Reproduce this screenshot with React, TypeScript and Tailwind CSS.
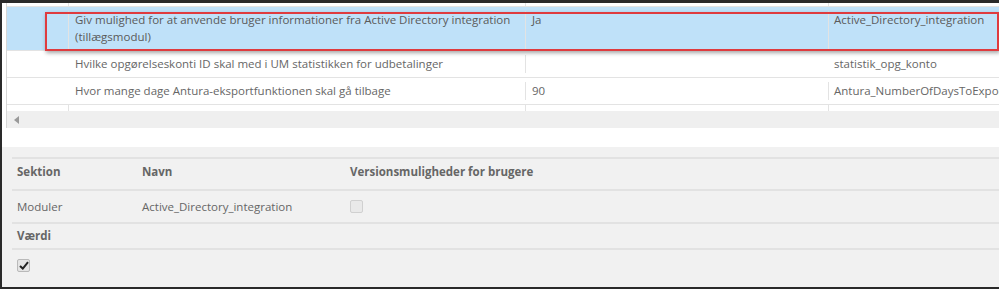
import React from 'react';

const font = { fontFamily: '"Open Sans", "Liberation Sans", sans-serif' };

const rows = [
  { desc: 'Hvilke opgørelseskonti ID skal med i UM statistikken for udbetalinger', value: '', key: 'statistik_opg_konto' },
  { desc: 'Hvor mange dage Antura-eksportfunktionen skal gå tilbage', value: '90', key: 'Antura_NumberOfDaysToExport' },
];

const Cells: React.FC<{ desc?: React.ReactNode; value?: string; name?: string; className?: string }> = ({ desc, value, name, className }) => (
  <div className={`flex border-b border-[#e3e3e3] ${className ?? ''}`}>
    <div className="w-[62px] shrink-0 border-r border-[#e3e3e3]" />
    <div className="w-[457px] shrink-0 border-r border-[#e3e3e3] px-[6px]">{desc}</div>
    <div className="w-[303px] shrink-0 border-r border-[#e3e3e3] px-[6px]">{value}</div>
    <div className="flex-1 whitespace-nowrap overflow-hidden px-[5px]">{name}</div>
  </div>
);

export default function App() {
  return (
    <div
      className="relative w-[999px] h-[289px] overflow-hidden bg-white border-l-2 border-t-[3px] border-b-[2px] border-[#2a2a2a] text-[11.5px] text-[#666]"
      style={font}
    >
      {/* upper grid */}
      <div className="ml-[4px] border-l border-[#d6d6d6]">
        <Cells className="h-[4px]" />
        <Cells
          className="h-[44px] bg-[#bfe1f9] pt-[4px] leading-[17px] text-[#5a5a5a]"
          desc={
            <>
              Giv mulighed for at anvende bruger informationer fra Active Directory integration (tillægsmodul)
            </>
          }
          value="Ja"
          name="Active_Directory_integration"
        />
        {rows.map((r) => (
          <Cells key={r.key} className="h-[27px] items-center" desc={r.desc} value={r.value} name={r.key} />
        ))}
        <Cells className="h-[6px] border-b-0" />
        <div className="h-[17px] bg-[#efefef] flex items-center pl-[7px]">
          <svg width="5" height="8" viewBox="0 0 5 8">
            <path d="M5 0 L0 4 L5 8 Z" fill="#9a9a9a" />
          </svg>
        </div>
      </div>

      <div className="h-[19px]" />

      {/* detail panel */}
      <div className="bg-[#f1f1f1] h-[141px] pl-[10px] pt-[10px]">
        <div className="border-t-2 border-[#e2e2e2]">
          <div className="flex h-[32px] items-center pb-[4px] font-bold text-[#666] border-b-2 border-[#e2e2e2]">
            <div className="w-[125px] pl-[5px]">Sektion</div>
            <div className="w-[208px] pl-[5px]">Navn</div>
            <div className="pl-[5px]">Versionsmuligheder for brugere</div>
          </div>
          <div className="flex h-[33px] items-center border-b-2 border-[#e2e2e2]">
            <div className="w-[125px] pl-[5px]">Moduler</div>
            <div className="w-[208px] pl-[5px]">Active_Directory_integration</div>
            <div className="pl-[5px]">
              <div className="w-[13px] h-[13px] rounded-[2px] border border-[#d0d0d0] bg-[#e9e9e9]" />
            </div>
          </div>
          <div className="flex h-[26px] items-center font-bold border-b-2 border-[#e2e2e2] pl-[5px]">Værdi</div>
          <div className="pl-[5px] pt-[9px]">
            <div className="w-[13px] h-[13px] rounded-[2px] border border-[#b9b9b9] bg-[#e4e4e4] flex items-center justify-center">
              <svg width="10" height="9" viewBox="0 0 10 9">
                <path d="M1 5 L3.8 7.6 L9 1.2" fill="none" stroke="#222" strokeWidth="2" />
              </svg>
            </div>
          </div>
        </div>
      </div>

      {/* highlight annotation */}
      <div className="absolute left-[43px] top-[9px] w-[954px] h-[39px] border-2 border-[#df3b3f] shadow-[1px_2px_4px_rgba(0,0,0,0.35)] pointer-events-none" />
    </div>
  );
}
